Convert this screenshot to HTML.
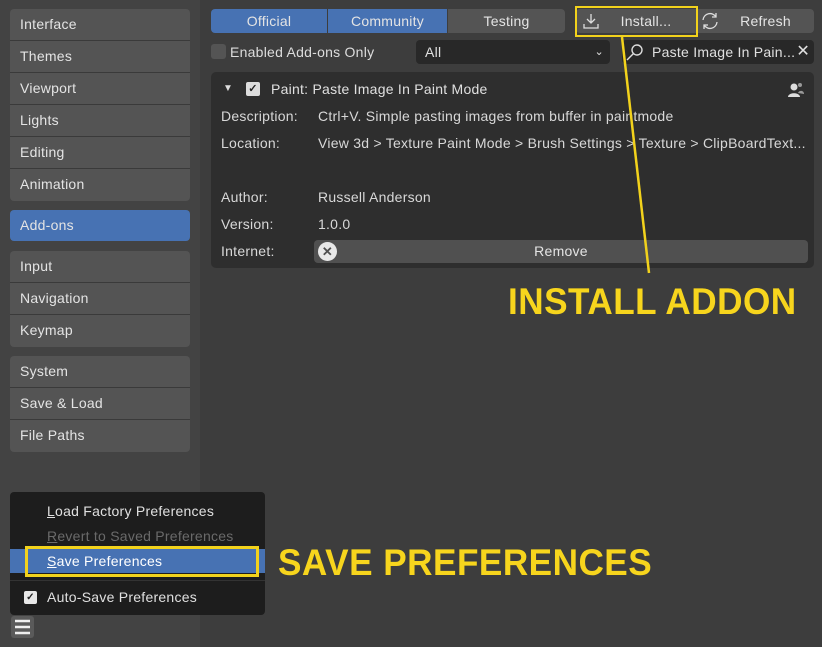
<!DOCTYPE html>
<html><head><style>
*{box-sizing:border-box;margin:0;padding:0}
body{width:822px;height:647px;overflow:hidden;background:#3d3d3d;font-family:"Liberation Sans",sans-serif;font-size:14px;letter-spacing:0.25px;color:#e0e0e0;position:relative}
.side{position:absolute;left:0;top:0;width:200px;height:647px;background:#434343}
.grp{position:absolute;left:10px;width:180px;border-radius:4px;overflow:hidden;background:#545454}
.grp div{height:32px;line-height:31px;padding-left:10px;border-bottom:1px solid #3a3a3a;color:#e4e4e4}
.grp div:last-child{border-bottom:none}
.abs{position:absolute}
.btn{position:absolute;height:24px;line-height:24px;text-align:center;background:#545454;color:#e4e4e4}
.lbl{position:absolute;left:221px;color:#d8d8d8}
.val{position:absolute;left:318px;color:#d8d8d8}
.y{color:#f7d51d;font-family:"Liberation Sans",sans-serif;font-weight:bold;position:absolute;font-size:37px;letter-spacing:0.5px;transform:scaleX(0.95);transform-origin:0 0;white-space:nowrap}
</style></head><body>
<div class="side"></div>
<div class="grp" style="top:9px"><div>Interface</div><div>Themes</div><div>Viewport</div><div>Lights</div><div>Editing</div><div>Animation</div></div>
<div class="grp" style="top:210px;background:#4772b3"><div style="height:31px">Add-ons</div></div>
<div class="grp" style="top:251px"><div>Input</div><div>Navigation</div><div>Keymap</div></div>
<div class="grp" style="top:356px"><div>System</div><div>Save &amp; Load</div><div>File Paths</div></div>

<div class="btn" style="left:211px;top:9px;width:116px;background:#4772b3;border-radius:4px 0 0 4px">Official</div>
<div class="btn" style="left:328px;top:9px;width:119px;background:#4772b3">Community</div>
<div class="btn" style="left:448px;top:9px;width:117px;border-radius:0 4px 4px 0">Testing</div>
<div class="btn" style="left:576px;top:9px;width:120px;border-radius:4px 0 0 4px;padding-left:20px">Install...</div>
<svg class="abs" style="left:582px;top:12px" width="18" height="18" viewBox="0 0 18 18" fill="none" stroke="#ddd" stroke-width="1.3"><path d="M9 2v9M5 7l4 4 4-4M2 12v4h14v-4"/></svg>
<div class="btn" style="left:697px;top:9px;width:117px;border-radius:0 4px 4px 0;padding-left:20px">Refresh</div>
<svg class="abs" style="left:700px;top:11px" width="20" height="20" viewBox="0 0 20 20" fill="none" stroke="#ddd" stroke-width="1.3"><path d="M3 9a7 7 0 0 1 13-3M17 11a7 7 0 0 1-13 3M16 2v4h-4M4 18v-4h4"/></svg>
<div class="abs" style="left:575px;top:6px;width:123px;height:31px;border:2px solid #f2d21c"></div>

<div class="abs" style="left:211px;top:44px;width:15px;height:15px;background:#545454;border-radius:3px"></div>
<div class="abs" style="left:230px;top:44px;color:#ddd">Enabled Add-ons Only</div>
<div class="abs" style="left:416px;top:40px;width:194px;height:24px;background:#282828;border-radius:4px;padding-left:9px;line-height:24px">All<span style="position:absolute;right:6px;font-size:11px">⌄</span></div>
<div class="abs" style="left:622px;top:40px;width:192px;height:24px;background:#282828;border-radius:4px;line-height:24px;padding-left:30px;white-space:nowrap;overflow:hidden">Paste Image In Pain...<span style="position:absolute;right:4px;top:0;font-size:16px;background:#282828;padding-left:2px">✕</span></div>
<svg class="abs" style="left:625px;top:43px" width="20" height="18" viewBox="0 0 20 18" fill="none" stroke="#ddd" stroke-width="1.4"><circle cx="12" cy="7" r="5"/><path d="M8.5 10.5L2 17"/></svg>

<div class="abs" style="left:211px;top:72px;width:603px;height:196px;background:#2e2e2e;border-radius:5px"></div>
<div class="abs" style="left:223px;top:83px;font-size:10px;color:#ddd">▼</div>
<div class="abs" style="left:246px;top:82px;width:14px;height:14px;background:#ddd;border-radius:2px;color:#222;font-size:11px;line-height:14px;text-align:center;font-weight:bold">✓</div>
<div class="abs" style="left:271px;top:81px;color:#e0e0e0">Paint: Paste Image In Paint Mode</div>
<svg class="abs" style="left:787px;top:81px" width="18" height="18" viewBox="0 0 18 18" fill="#ddd"><circle cx="7" cy="6" r="3.5"/><path d="M1 16c0-5 12-5 12 0z"/><circle cx="13" cy="4" r="2" fill="#999"/><path d="M11 12c1-3 6-3 6 1z" fill="#999"/></svg>
<div class="lbl" style="top:108px">Description:</div><div class="val" style="top:108px">Ctrl+V. Simple pasting images from buffer in paintmode</div>
<div class="lbl" style="top:135px">Location:</div><div class="val" style="top:135px;white-space:nowrap;width:492px;overflow:hidden">View 3d &gt; Texture Paint Mode &gt; Brush Settings &gt; Texture &gt; ClipBoardText...</div>
<div class="lbl" style="top:189px">Author:</div><div class="val" style="top:189px">Russell Anderson</div>
<div class="lbl" style="top:216px">Version:</div><div class="val" style="top:216px">1.0.0</div>
<div class="lbl" style="top:243px">Internet:</div>
<div class="btn" style="left:314px;top:240px;width:494px;height:23px;line-height:23px;border-radius:4px;background:#505050">Remove</div>
<div class="abs" style="left:318px;top:242px;width:19px;height:19px;border-radius:50%;background:#e8e8e8;color:#505050;font-size:13px;line-height:19px;text-align:center;font-weight:bold">✕</div>

<svg class="abs" style="left:0;top:0" width="822" height="647"><line x1="622" y1="37" x2="649" y2="273" stroke="#f2d21c" stroke-width="2.5"/></svg>
<div class="y" style="left:508px;top:281px">INSTALL ADDON</div>

<div class="abs" style="left:10px;top:492px;width:255px;height:123px;background:#1d1d1d;border-radius:4px"></div>
<div class="abs" style="left:47px;top:503px;color:#e0e0e0"><u>L</u>oad Factory Preferences</div>
<div class="abs" style="left:47px;top:528px;color:#6a6a6a"><u>R</u>evert to Saved Preferences</div>
<div class="abs" style="left:10px;top:549px;width:255px;height:24px;background:#4772b3"></div>
<div class="abs" style="left:47px;top:553px;color:#fff"><u>S</u>ave Preferences</div>
<div class="abs" style="left:25px;top:546px;width:234px;height:31px;border:3px solid #f2d21c"></div>
<div class="abs" style="left:10px;top:580px;width:255px;height:1px;background:#333"></div>
<div class="abs" style="left:24px;top:591px;width:13px;height:13px;background:#e8e8e8;border-radius:2px;color:#222;font-size:10px;line-height:13px;text-align:center;font-weight:bold">✓</div>
<div class="abs" style="left:47px;top:589px;color:#e0e0e0">Auto-Save Preferences</div>
<div class="abs" style="left:11px;top:616px;width:23px;height:22px;background:#5a5a5a;border-radius:3px"></div>
<svg class="abs" style="left:13px;top:618px" width="19" height="18"><path d="M2 3h15M2 9h15M2 15h15" stroke="#eee" stroke-width="2.5"/></svg>
<div class="y" style="left:278px;top:542px">SAVE PREFERENCES</div>
</body></html>
